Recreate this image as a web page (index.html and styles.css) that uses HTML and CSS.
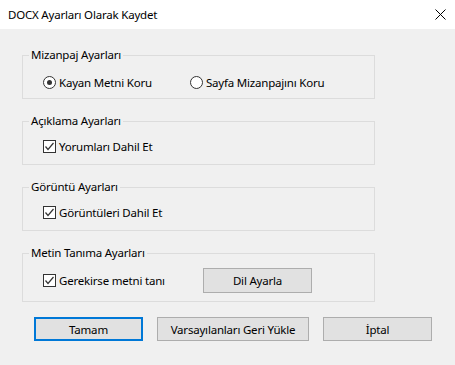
FILE: index.html
```html
<!DOCTYPE html>
<html lang="tr">
<head>
    <meta charset="UTF-8">
    <title>DOCX Ayarları Olarak Kaydet</title>
    <link rel="stylesheet" href="styles.css">
</head>
<body>
    <div class="dialog">
        <div class="titlebar">
            <span class="title">DOCX Ayarları Olarak Kaydet</span>
            <svg class="close" width="11" height="11" viewBox="0 0 11 11">
                <path d="M0.5 0.5 L10.5 10.5 M10.5 0.5 L0.5 10.5" stroke="#000" stroke-width="1" fill="none"/>
            </svg>
        </div>

        <div class="content">
            <fieldset class="group">
                <legend>Mizanpaj Ayarları</legend>
                <div class="row first">
                    <label class="opt opt-wide"><span class="radio checked"></span>Kayan Metni Koru</label>
                    <label class="opt"><span class="radio"></span>Sayfa Mizanpajını Koru</label>
                </div>
            </fieldset>

            <fieldset class="group">
                <legend>Açıklama Ayarları</legend>
                <div class="row">
                    <label class="opt"><span class="check"><svg width="11" height="11" viewBox="0 0 11 11"><path d="M1.5 5.5 L4 8.5 L9.5 2" stroke="#333" stroke-width="1.2" fill="none"/></svg></span>Yorumları Dahil Et</label>
                </div>
            </fieldset>

            <fieldset class="group">
                <legend>Görüntü Ayarları</legend>
                <div class="row">
                    <label class="opt"><span class="check"><svg width="11" height="11" viewBox="0 0 11 11"><path d="M1.5 5.5 L4 8.5 L9.5 2" stroke="#333" stroke-width="1.2" fill="none"/></svg></span>Görüntüleri Dahil Et</label>
                </div>
            </fieldset>

            <fieldset class="group last">
                <legend>Metin Tanıma Ayarları</legend>
                <div class="row">
                    <label class="opt opt-wide"><span class="check"><svg width="11" height="11" viewBox="0 0 11 11"><path d="M1.5 5.5 L4 8.5 L9.5 2" stroke="#333" stroke-width="1.2" fill="none"/></svg></span>Gerekirse metni tanı</label>
                    <button class="btn">Dil Ayarla</button>
                </div>
            </fieldset>

            <div class="actions">
                <button class="btn default">Tamam</button>
                <button class="btn wide">Varsayılanları Geri Yükle</button>
                <button class="btn">İptal</button>
            </div>
        </div>
    </div>
</body>
</html>
```

FILE: styles.css
```css
body {
    margin: 0;
    font-family: "Noto Sans", "Open Sans", sans-serif;
    font-size: 11.5px;
    letter-spacing: -0.2px;
    color: #000;
    background: #f0f0f0;
}

.dialog {
    width: 455px;
    height: 365px;
    background: #f0f0f0;
}

.titlebar {
    height: 29px;
    background: #fff;
    display: flex;
    align-items: center;
    justify-content: space-between;
    padding: 0 9px 0 8px;
}

.title {
    margin-top: -1px;
}

.close {
    display: block;
    margin-top: -1px;
}

.content {
    padding: 18px 0 0 22px;
}

.group {
    width: 351px;
    margin: 0 0 14px 0;
    padding: 0;
    border: 1px solid #dcdcdc;
}

.group legend {
    margin-left: 6px;
    padding: 0 2px;
    line-height: 16px;
}

.row {
    display: flex;
    align-items: center;
    height: 16px;
    padding: 9px 0 10px 20px;
}

.row.first {
    padding: 11px 0 8px 20px;
}

.group.last {
    margin-bottom: 15px;
}

.group.last .row {
    padding: 11px 0 13px 20px;
}

.opt {
    display: flex;
    align-items: center;
    white-space: nowrap;
}

.opt-wide {
    width: 147px;
}

.group.last .opt-wide {
    width: 160px;
}

.radio {
    width: 11px;
    height: 11px;
    border: 1px solid #333;
    border-radius: 50%;
    margin-right: 3px;
    position: relative;
    background: #fff;
}

.radio.checked::after {
    content: "";
    position: absolute;
    left: 3px;
    top: 3px;
    width: 5px;
    height: 5px;
    border-radius: 50%;
    background: #333;
}

.check {
    width: 11px;
    height: 11px;
    border: 1px solid #333;
    margin-right: 3px;
    background: #fff;
    display: flex;
}

.btn {
    font-family: inherit;
    font-size: 11.5px;
    letter-spacing: -0.2px;
    color: #000;
    width: 109px;
    height: 25px;
    background: #e1e1e1;
    border: 1px solid #adadad;
    padding: 0;
    margin: 0;
}

.actions {
    display: flex;
    gap: 14px;
    padding-left: 12px;
}

.actions .btn {
    height: 24px;
}

.btn.wide {
    width: 152px;
}

.btn.default {
    border: 2px solid #0078d7;
}
```
